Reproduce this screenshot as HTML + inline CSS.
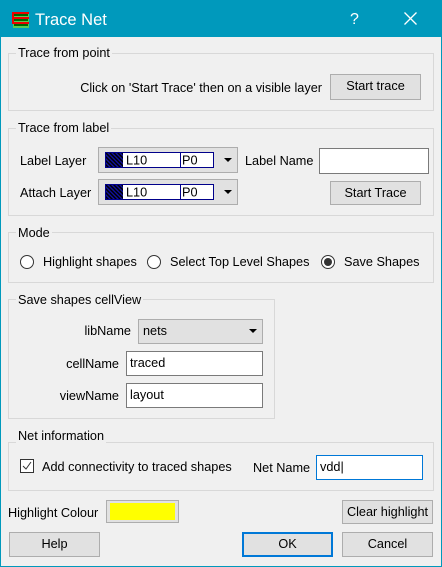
<!DOCTYPE html>
<html><head><meta charset="utf-8"><style>
*{box-sizing:border-box;margin:0;padding:0}
body{width:442px;height:567px;background:#0099bc;font-family:"Liberation Sans",sans-serif;font-size:12.7px;color:#000;position:relative;overflow:hidden}
.win{position:absolute;left:1px;top:37px;width:440px;height:529px;background:#f0f0f0}
.a{position:absolute}
.t{position:absolute;white-space:nowrap;line-height:14px}
.r{position:absolute;white-space:nowrap;line-height:14px;text-align:right}
.grp{position:absolute;border:1px solid #d8d8d8}
.gt{position:absolute;background:#f0f0f0;padding:0 2px;line-height:14px;white-space:nowrap}
.btn{position:absolute;background:#e1e1e1;border:1px solid #adadad;text-align:center;line-height:23px}
.inp{position:absolute;background:#fff;border:1px solid #7a7a7a;line-height:22px;padding-left:3px}
.radio{position:absolute;width:14px;height:14px;border:1px solid #333;border-radius:50%;background:#fff}
.arrow{position:absolute;width:0;height:0;border-left:4px solid transparent;border-right:4px solid transparent;border-top:4px solid #000}
</style></head><body>
<svg class="a" style="left:11px;top:11px" width="19" height="18" viewBox="0 0 19 18">
<rect x="2" y="1" width="16" height="16" fill="#5c5"/>
<rect x="3" y="3" width="14" height="2" fill="#060"/><rect x="3" y="8" width="14" height="2" fill="#060"/><rect x="3" y="13" width="14" height="2" fill="#060"/>
<path d="M18 2H2V7H18M2 7V12H18" stroke="#e00" stroke-width="2" fill="none"/>
</svg>
<div class="t" style="left:35px;top:11px;font-size:16.5px;line-height:18px;color:#fff">Trace Net</div>
<div class="t" style="left:350px;top:11px;font-size:16px;line-height:18px;color:#fff">?</div>
<svg class="a" style="left:404px;top:12px" width="13" height="13"><path d="M0.5 0.5L12.5 12.5M12.5 0.5L0.5 12.5" stroke="#fff" stroke-width="1.3"/></svg>
<div class="win"></div>

<div class="grp" style="left:8px;top:53px;width:426px;height:58px"></div>
<div class="gt" style="left:16px;top:46px">Trace from point</div>
<div class="r" style="right:120px;top:81px">Click on 'Start Trace' then on a visible layer</div>
<div class="btn" style="left:330px;top:74px;width:91px;height:26px">Start trace</div>

<div class="grp" style="left:8px;top:128px;width:426px;height:88px"></div>
<div class="gt" style="left:16px;top:121px">Trace from label</div>
<div class="t" style="left:20px;top:154px">Label Layer</div>
<div class="t" style="left:20px;top:186px">Attach Layer</div>
<div class="a" style="left:98px;top:147px;width:140px;height:26px;background:#e1e1e1;border:1px solid #adadad"></div>
<div class="a" style="left:98px;top:179px;width:140px;height:26px;background:#e1e1e1;border:1px solid #adadad"></div>
<svg class="a" style="left:105px;top:152px" width="109" height="16"><defs><pattern id="h" width="4" height="4" patternUnits="userSpaceOnUse"><rect width="4" height="4" fill="#1010a0"/><path d="M-1 -1L5 5M-1 3L1 5M3 -1L5 1" stroke="#000" stroke-width="1.5"/></pattern></defs><rect x="0.5" y="0.5" width="108" height="15" fill="#fff" stroke="#00008b"/><rect x="1" y="1" width="17" height="14" fill="url(#h)"/><line x1="75.5" y1="0" x2="75.5" y2="16" stroke="#00008b"/><text x="21" y="12.5" font-family="Liberation Sans" font-size="12.7">L10</text><text x="77" y="12.5" font-family="Liberation Sans" font-size="12.7">P0</text></svg>
<svg class="a" style="left:105px;top:184px" width="109" height="16"><rect x="0.5" y="0.5" width="108" height="15" fill="#fff" stroke="#00008b"/><rect x="1" y="1" width="17" height="14" fill="url(#h)"/><line x1="75.5" y1="0" x2="75.5" y2="16" stroke="#00008b"/><text x="21" y="12.5" font-family="Liberation Sans" font-size="12.7">L10</text><text x="77" y="12.5" font-family="Liberation Sans" font-size="12.7">P0</text></svg>
<div class="arrow" style="left:224px;top:158px"></div>
<div class="arrow" style="left:224px;top:190px"></div>
<div class="t" style="left:245px;top:154px">Label Name</div>
<div class="inp" style="left:319px;top:148px;width:110px;height:26px"></div>
<div class="btn" style="left:330px;top:181px;width:91px;height:24px">Start Trace</div>

<div class="grp" style="left:8px;top:232px;width:426px;height:51px"></div>
<div class="gt" style="left:16px;top:226px">Mode</div>
<div class="radio" style="left:20px;top:255px"></div>
<div class="t" style="left:43px;top:255px">Highlight shapes</div>
<div class="radio" style="left:147px;top:255px"></div>
<div class="t" style="left:170px;top:255px">Select Top Level Shapes</div>
<div class="radio" style="left:321px;top:255px"><div class="a" style="left:2px;top:2px;width:8px;height:8px;border-radius:50%;background:#333"></div></div>
<div class="t" style="left:344px;top:255px">Save Shapes</div>

<div class="grp" style="left:8px;top:299px;width:267px;height:120px"></div>
<div class="gt" style="left:16px;top:293px">Save shapes cellView</div>
<div class="r" style="right:311px;top:324px">libName</div>
<div class="a" style="left:138px;top:319px;width:125px;height:25px;background:#e1e1e1;border:1px solid #adadad;padding-left:4px;line-height:23px">nets</div>
<div class="arrow" style="left:249px;top:329px"></div>
<div class="r" style="right:323px;top:357px">cellName</div>
<div class="inp" style="left:126px;top:351px;width:137px;height:25px">traced</div>
<div class="r" style="right:323px;top:389px">viewName</div>
<div class="inp" style="left:126px;top:383px;width:137px;height:25px">layout</div>

<div class="grp" style="left:8px;top:442px;width:426px;height:49px"></div>
<div class="gt" style="left:16px;top:429px">Net information</div>
<div class="a" style="left:20px;top:459px;width:14px;height:14px;border:1px solid #333;background:#fff"></div>
<svg class="a" style="left:22px;top:461px" width="10" height="10"><path d="M1 5L4 8L9 1" stroke="#333" stroke-width="1" fill="none"/></svg>
<div class="t" style="left:42px;top:460px">Add connectivity to traced shapes</div>
<div class="t" style="left:253px;top:461px">Net Name</div>
<div class="inp" style="left:316px;top:455px;width:107px;height:25px;border-color:#0078d7">vdd|</div>

<div class="t" style="left:8px;top:506px">Highlight Colour</div>
<div class="a" style="left:106px;top:500px;width:73px;height:23px;border:1px solid #adadad;background:#e1e1e1"><div class="a" style="left:3px;top:2px;width:65px;height:17px;background:#ff0"></div></div>
<div class="btn" style="left:342px;top:500px;width:91px;height:24px">Clear highlight</div>
<div class="btn" style="left:9px;top:532px;width:91px;height:25px">Help</div>
<div class="btn" style="left:242px;top:532px;width:91px;height:25px;border:2px solid #0078d7;line-height:21px">OK</div>
<div class="btn" style="left:342px;top:532px;width:91px;height:25px">Cancel</div>
</body></html>
